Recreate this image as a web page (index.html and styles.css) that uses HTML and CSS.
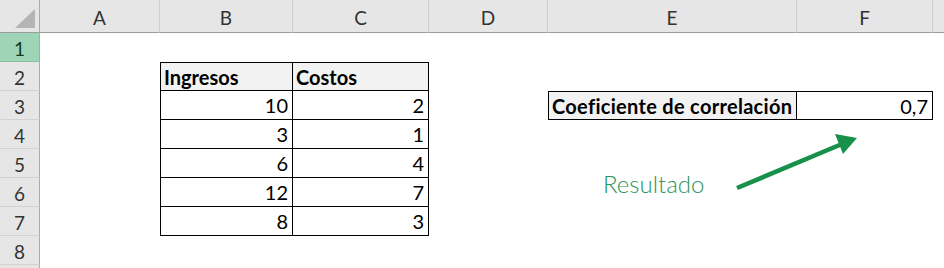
FILE: index.html
```html
<!DOCTYPE html>
<html lang="es">
<head>
  <meta charset="UTF-8" />
  <title>Coeficiente de correlación</title>
  <link rel="stylesheet" href="styles.css">
</head>
<body>
  <div class="sheet">
    <!-- cabecera de columnas -->
    <div class="corner"></div>
    <div class="col-head">A</div>
    <div class="col-head">B</div>
    <div class="col-head">C</div>
    <div class="col-head">D</div>
    <div class="col-head">E</div>
    <div class="col-head">F</div>
    <div class="col-head last"></div>

    <!-- fila 1 -->
    <div class="row-head active">1</div>
    <div class="cell"></div><div class="cell"></div><div class="cell"></div><div class="cell"></div><div class="cell"></div><div class="cell"></div><div class="cell"></div>

    <!-- fila 2 -->
    <div class="row-head">2</div>
    <div class="cell"></div>
    <div class="cell box box-l box-t title">Ingresos</div>
    <div class="cell box box-t title">Costos</div>
    <div class="cell"></div><div class="cell"></div><div class="cell"></div><div class="cell"></div>

    <!-- fila 3 -->
    <div class="row-head">3</div>
    <div class="cell"></div>
    <div class="cell box box-l num">10</div>
    <div class="cell box num">2</div>
    <div class="cell"></div>
    <div class="cell box box-l box-t title wide">Coeficiente de correlación</div>
    <div class="cell box box-t num">0,7</div>
    <div class="cell"></div>

    <!-- fila 4 -->
    <div class="row-head">4</div>
    <div class="cell"></div>
    <div class="cell box box-l num">3</div>
    <div class="cell box num">1</div>
    <div class="cell"></div><div class="cell"></div><div class="cell"></div><div class="cell"></div>

    <!-- fila 5 -->
    <div class="row-head">5</div>
    <div class="cell"></div>
    <div class="cell box box-l num">6</div>
    <div class="cell box num">4</div>
    <div class="cell"></div><div class="cell"></div><div class="cell"></div><div class="cell"></div>

    <!-- fila 6 -->
    <div class="row-head">6</div>
    <div class="cell"></div>
    <div class="cell box box-l num">12</div>
    <div class="cell box num">7</div>
    <div class="cell"></div><div class="cell"></div><div class="cell"></div><div class="cell"></div>

    <!-- fila 7 -->
    <div class="row-head">7</div>
    <div class="cell"></div>
    <div class="cell box box-l num">8</div>
    <div class="cell box num">3</div>
    <div class="cell"></div><div class="cell"></div><div class="cell"></div><div class="cell"></div>

    <!-- fila 8 -->
    <div class="row-head">8</div>
    <div class="cell"></div><div class="cell"></div><div class="cell"></div><div class="cell"></div><div class="cell"></div><div class="cell"></div><div class="cell"></div>

    <!-- fila 9, casi fuera de la vista -->
    <div class="row-head"></div>
    <div class="cell"></div><div class="cell"></div><div class="cell"></div><div class="cell"></div><div class="cell"></div><div class="cell"></div><div class="cell"></div>

    <!-- anotación sobre la hoja -->
    <div class="note">Resultado</div>
    <svg class="arrow" width="140" height="70" viewBox="0 0 140 70">
      <line x1="10" y1="60" x2="115" y2="16" stroke="#17904a" stroke-width="4.5" />
      <polygon points="130,10 108,6 116,26" fill="#17904a" />
    </svg>
  </div>
</body>
</html>
```

FILE: styles.css
```css
body {
  margin: 0;
  background: #fff;
  font-family: Lato, 'Liberation Sans', sans-serif;
  overflow: hidden;
}
.sheet {
  position: relative;
  display: grid;
  grid-template-columns: 40px 120px 133px 136px 119px 249px 136px 11px;
  grid-template-rows: 33px repeat(9, 29px);
  width: 944px;
  height: 268px;
  overflow: hidden;
}
.corner {
  position: relative;
  background: #e6e6e6;
  border-right: 1px solid #ababab;
  border-bottom: 1px solid #9c9c9c;
}
.corner::after {
  content: '';
  position: absolute;
  right: 4px;
  bottom: 4px;
  width: 20px;
  height: 19px;
  background: #b5b5b5;
  clip-path: polygon(100% 0, 100% 100%, 0 100%);
}
.col-head {
  background: #e6e6e6;
  border-right: 1px solid #cfcfcf;
  border-bottom: 1px solid #9c9c9c;
  color: #333;
  font-size: 19px;
  line-height: 32px;
  text-align: center;
  padding-top: 2px;
  box-sizing: border-box;
}
.col-head.last {
  border-right: none;
}
.row-head {
  background: #e6e6e6;
  border-right: 1px solid #ababab;
  border-bottom: 1px solid #d2d2d2;
  color: #333;
  font-size: 19px;
  line-height: 29px;
  text-align: center;
  box-sizing: border-box;
  padding-top: 1px;
}
.row-head.active {
  background: #9fd5b7;
  color: #0f3d22;
  border-bottom-color: #8cbfa1;
}
.cell {
  background: #fff;
  font-size: 20px;
  line-height: 29px;
  color: #000;
  box-sizing: border-box;
  padding: 0 4px;
  white-space: nowrap;
  overflow: hidden;
}
.box {
  border: 0 solid #000;
  border-right-width: 1px;
  border-bottom-width: 1px;
}
.box-l {
  border-left-width: 1px;
}
.box-t {
  border-top-width: 1px;
}
.title {
  background: #f2f2f2;
  font-weight: bold;
  padding-left: 3px;
}
.title.wide {
  letter-spacing: 0.3px;
}
.num {
  text-align: right;
}
.note {
  position: absolute;
  left: 603px;
  top: 169px;
  font-size: 24px;
  font-weight: 300;
  color: #2a9457;
}
.arrow {
  position: absolute;
  left: 727px;
  top: 128px;
}
```
